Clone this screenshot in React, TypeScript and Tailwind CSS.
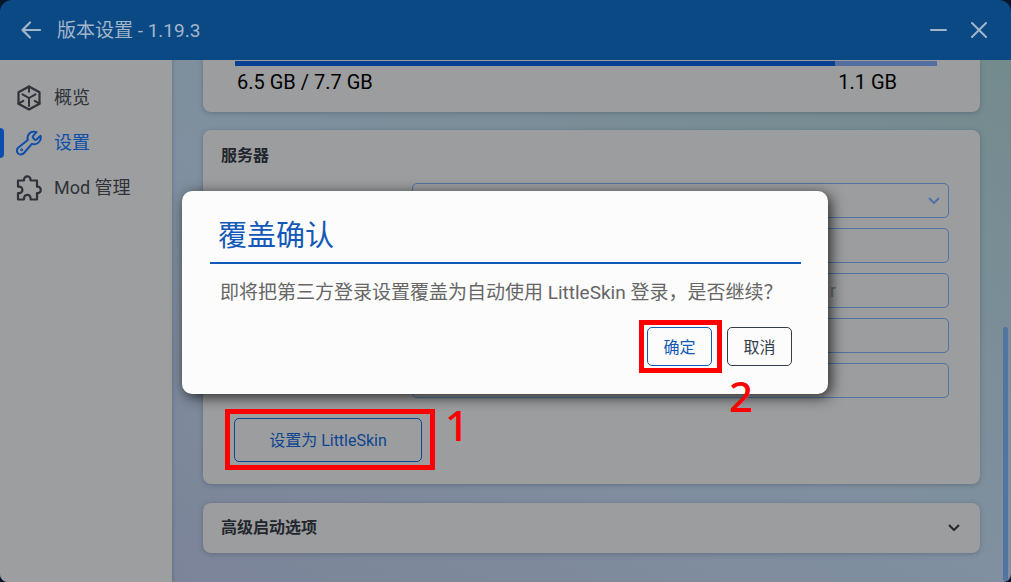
import type { ReactNode } from "react";

const stroke = {
  fill: "none",
  stroke: "currentColor",
  strokeLinecap: "round" as const,
  strokeLinejoin: "round" as const,
};

function CubeIcon() {
  return (
    <svg viewBox="0 0 26 26" className="size-[26px]" strokeWidth="2.2" {...stroke} aria-hidden="true">
      <path d="M13 1.500 23.500 7.300v11.400L13 24.500 2.500 18.700V7.300z" />
      <path
        d="M13 13 6.500 9.300M13 13l6.500-3.700M13 13v8M13 1.500v5.300M2.500 18.700l4.800-2.900M23.500 18.700l-4.800-2.900"
        strokeWidth="2"
      />
    </svg>
  );
}

function WrenchIcon() {
  return (
    <svg viewBox="0 0 26 26" className="size-[26px]" strokeWidth="2" {...stroke} aria-hidden="true">
      <path d="M20.500 2.100c-3.200-1.200-6.700.1-8.200 2.900-.9 1.600-1 3.400-.5 5L2.400 17.500c-1.900 1.700-2 4.300-.4 5.900 1.700 1.700 4.400 1.500 6-.4l7.800-9.100c3.400 1 6.800-.7 8.300-3.500.8-1.600.9-3.200.4-4.700l-3.700 3.500c-.7.7-1.700.7-2.400 0l-1.100-1.100c-.7-.7-.7-1.700 0-2.400z" />
      <circle cx="5.700" cy="19.800" r="0.500" />
    </svg>
  );
}

function PuzzleIcon() {
  return (
    <svg viewBox="0 0 26 26" className="size-[26px]" strokeWidth="2.2" {...stroke} aria-hidden="true">
      <path d="M2 5.500h6V4.700a3.300 3.300 0 0 1 6.600 0v.8h6.400v6.200h.6a3.200 3.200 0 0 1 0 6.400H21v6.400h-6.400v-1.300a3.300 3.300 0 0 0-6.600 0v1.300H2v-6.400h1.200a3.200 3.200 0 0 0 0-6.400H2z" />
    </svg>
  );
}

function Chevron({ className }: { className: string }) {
  return (
    <svg viewBox="0 0 12 8" className={className} strokeWidth="2" {...stroke} strokeLinecap="butt" aria-hidden="true">
      <path d="M1 1l5 5 5-5" />
    </svg>
  );
}

function NavItem({ icon, label, active = false }: { icon: ReactNode; label: string; active?: boolean }) {
  return (
    <a
      href="#"
      aria-current={active ? "page" : undefined}
      className={
        active
          ? "relative flex h-[45px] items-center gap-3 pl-4 text-[#0d4fab]"
          : "relative flex h-[45px] items-center gap-3 pl-4 text-[#2f3238]"
      }
    >
      {active && <span className="absolute top-2 left-0 h-[30px] w-1 rounded-r-sm bg-[#0b4eb0]" />}
      {icon}
      <span>{label}</span>
    </a>
  );
}

function Card({ className, children }: { className: string; children: ReactNode }) {
  return (
    <section className={`shrink-0 bg-[#9c9d9f] shadow-[0_1px_5px_rgba(40,60,80,0.35)] ${className}`}>{children}</section>
  );
}

const fieldClass =
  "h-[35px] w-full rounded-[5px] border border-[#5272a3] bg-transparent px-3 text-base text-[#23262d]";

const markClass =
  "absolute font-['Noto_Sans',sans-serif] text-[42px] leading-[52px] font-medium text-[#ff0000]";

export default function App() {
  return (
    <div className="relative flex h-screen flex-col overflow-hidden bg-[#06172b] font-[Roboto,'Noto_Sans_CJK_SC',sans-serif] text-lg text-[#23262d]">
      <header className="flex h-[60px] shrink-0 items-center rounded-t-xl bg-[#0b4985] pr-6 pl-[21px] text-[#a3b6c9]">
        <button aria-label="返回" className="mr-4">
          <svg viewBox="0 0 20 18" className="h-[18px] w-5" strokeWidth="2.2" {...stroke} aria-hidden="true">
            <path d="M19 9H2M9 1.500 1.500 9 9 16.500" />
          </svg>
        </button>
        <h1 className="flex-1 pt-0.5 text-[19px]">版本设置 - 1.19.3</h1>
        <button aria-label="最小化" className="mr-6">
          <svg viewBox="0 0 17 16" className="h-4 w-[17px]" strokeWidth="2" {...stroke} aria-hidden="true">
            <path d="M1 8h15" />
          </svg>
        </button>
        <button aria-label="关闭">
          <svg viewBox="0 0 16 16" className="size-4" strokeWidth="2" {...stroke} aria-hidden="true">
            <path d="M1 1l14 14M15 1 1 15" />
          </svg>
        </button>
      </header>

      <div className="flex min-h-0 flex-1 overflow-hidden rounded-b-lg bg-linear-to-tr from-[#7b8297] via-[#8090a0] to-[#748b8e]">
        <nav className="w-[172px] shrink-0 bg-[#9c9ea0] pt-[15px] shadow-[0_0_4px_rgba(40,60,80,0.4)]">
          <NavItem icon={<CubeIcon />} label="概览" />
          <NavItem icon={<WrenchIcon />} label="设置" active />
          <NavItem icon={<PuzzleIcon />} label="Mod 管理" />
        </nav>

        <main className="flex min-w-0 flex-1 flex-col overflow-hidden pr-[31px] pl-[31px]">
          <Card className="h-[52px] rounded-b-lg pt-px pr-[43px] pl-8">
            <div className="flex h-[5px]">
              <div className="flex-[600] bg-[#083f91]" />
              <div className="flex-[102] bg-[#546f9f]" />
            </div>
            <div className="flex justify-between pt-0.5 pr-10 pl-0.5 text-xl text-black">
              <span>6.5 GB / 7.7 GB</span>
              <span>1.1 GB</span>
            </div>
          </Card>

          <Card className="mt-[18px] h-[354px] rounded-lg pt-3 pr-[31px] pl-[18px]">
            <h2 className="text-base leading-7 font-bold">服务器</h2>
            <div className="mt-[13px] ml-[191px] flex flex-col gap-[10px]">
              <div className="relative">
                <select aria-label="登录方式" className={`${fieldClass} appearance-none`} />
                <Chevron className="pointer-events-none absolute top-[14px] right-[9px] h-2 w-3 text-[#5272a3]" />
              </div>
              <input aria-label="服务器地址" className={fieldClass} />
              <div className="relative">
                <input aria-label="认证服务器" className={fieldClass} />
                <span className="absolute top-1 right-[113px] text-lg text-[#6c6f73]">r</span>
              </div>
              <input aria-label="认证名称" className={fieldClass} />
              <input aria-label="注册链接" className={fieldClass} />
            </div>
            <div className="mt-5 ml-[13px] flex w-[188px]">
              <button className="h-11 flex-1 rounded-[5px] border border-[#0d4590] pt-0.5 text-base text-[#0d4590]">
                设置为 LittleSkin
              </button>
            </div>
          </Card>

          <Card className="mt-[19px] flex h-[50px] items-center rounded-lg pr-5 pl-[18px]">
            <h2 className="flex-1 text-base font-bold">高级启动选项</h2>
            <button aria-label="展开">
              <Chevron className="h-2 w-3" />
            </button>
          </Card>
        </main>
        <div className="absolute right-[3px] bottom-px h-[254px] w-[5px] rounded-full bg-[#5174a1]" />
      </div>

      <div className="absolute top-[409px] left-[225px] h-[61px] w-[210px] border-5 border-[#ff0000]" />
      <span className={`${markClass} top-[399px] left-[445px]`}>1</span>

      <div className="absolute inset-0 flex items-center justify-center pr-px">
        <div
          role="dialog"
          aria-labelledby="confirm-title"
          className="relative mb-[-3px] flex h-[203px] w-[646px] flex-col rounded-[10px] bg-[#fcfcfc] px-7 pt-6 shadow-[3px_3px_14px_rgba(0,0,0,0.75)]"
        >
          <h2
            id="confirm-title"
            className="h-[49px] w-[591px] border-b-2 border-[#1259b8] pt-px pl-2 text-[29px] leading-10 text-[#1259b8]"
          >
            覆盖确认
          </h2>
          <p className="mt-[13px] pl-2.5 text-[19px] leading-8 text-[#666666]">
            即将把第三方登录设置覆盖为自动使用 LittleSkin 登录，是否继续？
          </p>
          <div className="mt-[18px] flex justify-end gap-[15px] pr-2 text-base">
            <div className="relative">
              <button className="h-[39px] w-[65px] rounded-[5px] border border-[#1259b8] pt-0.5 text-[#1259b8]">
                确定
              </button>
              <div className="pointer-events-none absolute -inset-y-[7px] -right-2.5 -left-2 border-5 border-[#ff0000]" />
            </div>
            <button className="h-[39px] w-[65px] rounded-[5px] border border-[#343d4a] pt-0.5 text-[#343d4a]">
              取消
            </button>
          </div>
          <span className={`${markClass} right-[75px] -bottom-7`}>2</span>
        </div>
      </div>
    </div>
  );
}
